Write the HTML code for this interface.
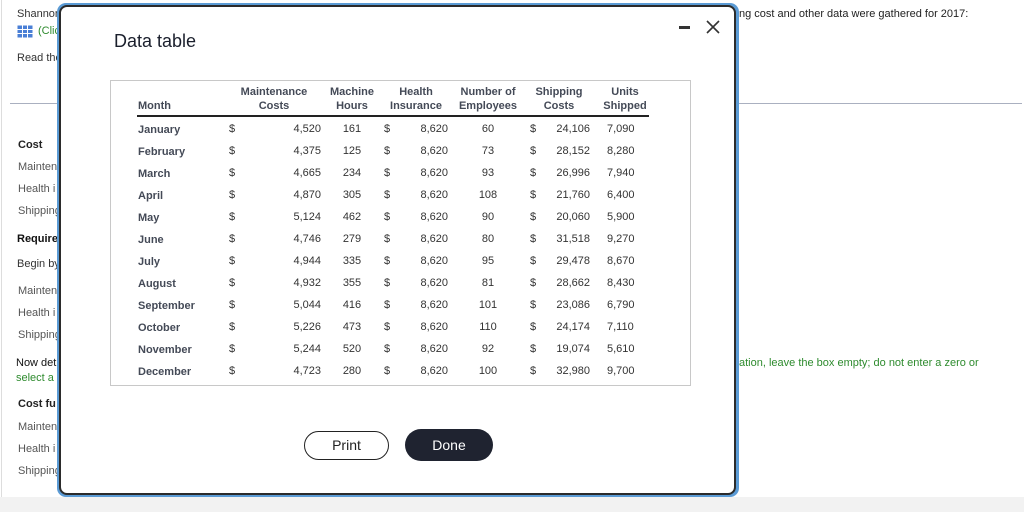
<!DOCTYPE html>
<html><head><meta charset="utf-8"><style>
*{margin:0;padding:0;box-sizing:border-box}
body{width:1024px;height:512px;position:relative;overflow:hidden;background:#fff;font-family:"Liberation Sans",Arial,sans-serif;color:#222}
.a{position:absolute;white-space:nowrap;font-size:11px;line-height:14px}
.bg{color:#333}
.g{color:#2e8b2e}
.b{font-weight:bold}
.m{font-weight:bold;color:#444a57}
.n{color:#333}
.r{text-align:right}
.c{text-align:center}
.h{font-weight:bold;color:#444a57;text-align:center;line-height:14px}
</style></head><body>
<div style="position:absolute;left:0;top:497px;width:1024px;height:15px;background:#f2f2f2"></div>
<div style="position:absolute;left:1px;top:0;width:1px;height:497px;background:#ddd"></div>
<div style="position:absolute;left:10px;top:103px;width:1012px;height:1px;background:#aab0c0"></div>

<div class="a bg" style="left:17px;top:7px">Shannon</div>
<svg style="position:absolute;left:17px;top:25px" width="16" height="13" viewBox="0 0 16 13"><rect x="0.5" y="0.5" width="15" height="12" fill="#4a7fd6"/><g stroke="#fff" stroke-width="1"><line x1="0" y1="4.5" x2="16" y2="4.5"/><line x1="0" y1="8.5" x2="16" y2="8.5"/><line x1="5.5" y1="0" x2="5.5" y2="13"/><line x1="10.5" y1="0" x2="10.5" y2="13"/></g></svg>
<div class="a g" style="left:38px;top:24px">(Click</div>
<div class="a bg" style="left:17px;top:51px">Read the</div>
<div class="a b" style="left:18px;top:138px">Cost</div>
<div class="a bg" style="left:18px;top:160px;color:#555">Maintenance</div>
<div class="a bg" style="left:18px;top:182px;color:#555">Health i</div>
<div class="a bg" style="left:18px;top:204px;color:#555">Shipping</div>
<div class="a b" style="left:17px;top:232px;color:#111">Require</div>
<div class="a bg" style="left:17px;top:257px">Begin by</div>
<div class="a bg" style="left:18px;top:284px;color:#555">Maintenance</div>
<div class="a bg" style="left:18px;top:306px;color:#555">Health i</div>
<div class="a bg" style="left:18px;top:328px;color:#555">Shipping</div>
<div class="a bg" style="left:16px;top:356px;color:#111">Now det</div>
<div class="a g" style="left:16px;top:371px">select a</div>
<div class="a b" style="left:18px;top:397px">Cost fu</div>
<div class="a bg" style="left:18px;top:420px;color:#555">Maintenance</div>
<div class="a bg" style="left:18px;top:442px;color:#555">Health i</div>
<div class="a bg" style="left:18px;top:464px;color:#555">Shipping</div>
<div class="a bg" style="left:739px;top:7px;color:#222">ng cost and other data were gathered for 2017:</div>
<div class="a g" style="left:739px;top:356px">ation, leave the box empty; do not enter a zero or</div>

<div style="position:absolute;left:57px;top:3px;width:682px;height:494px;border-radius:9px;background:#5b9bd5"></div>
<div style="position:absolute;left:59px;top:5px;width:677px;height:490px;border:2px solid #2b2b2b;border-radius:8px;background:#fff"></div>
<div class="a" style="left:114px;top:30px;font-size:18px;line-height:22px;color:#1a1f2c">Data table</div>
<div style="position:absolute;left:679px;top:26px;width:11px;height:3px;background:#333"></div>
<svg style="position:absolute;left:706px;top:20px" width="14" height="14" viewBox="0 0 14 14"><path d="M1 1L13 13M13 1L1 13" stroke="#333" stroke-width="1.6"/></svg>

<div style="position:absolute;left:110px;top:80px;width:581px;height:306px;border:1px solid #c8c8c8"></div>
<div style="position:absolute;left:137px;top:115px;width:512px;height:2px;background:#222"></div>

<div class="a m" style="left:138px;top:99px">Month</div>
<div class="a h" style="left:224px;top:85px;width:100px">Maintenance<br>Costs</div>
<div class="a h" style="left:322px;top:85px;width:60px">Machine<br>Hours</div>
<div class="a h" style="left:381px;top:85px;width:70px">Health<br>Insurance</div>
<div class="a h" style="left:450px;top:85px;width:76px">Number of<br>Employees</div>
<div class="a h" style="left:524px;top:85px;width:70px">Shipping<br>Costs</div>
<div class="a h" style="left:595px;top:85px;width:60px">Units<br>Shipped</div>

<div id="rows"></div>
<div class="a m" style="left:138px;top:123px">January</div><div class="a n" style="left:229px;top:122px">$</div><div class="a n r" style="left:260px;top:122px;width:61px">4,520</div><div class="a n c" style="left:332px;top:122px;width:40px">161</div><div class="a n" style="left:384px;top:122px">$</div><div class="a n r" style="left:400px;top:122px;width:48px">8,620</div><div class="a n c" style="left:468px;top:122px;width:40px">60</div><div class="a n" style="left:530px;top:122px">$</div><div class="a n r" style="left:540px;top:122px;width:50px">24,106</div><div class="a n" style="left:607px;top:122px">7,090</div>
<div class="a m" style="left:138px;top:145px">February</div><div class="a n" style="left:229px;top:144px">$</div><div class="a n r" style="left:260px;top:144px;width:61px">4,375</div><div class="a n c" style="left:332px;top:144px;width:40px">125</div><div class="a n" style="left:384px;top:144px">$</div><div class="a n r" style="left:400px;top:144px;width:48px">8,620</div><div class="a n c" style="left:468px;top:144px;width:40px">73</div><div class="a n" style="left:530px;top:144px">$</div><div class="a n r" style="left:540px;top:144px;width:50px">28,152</div><div class="a n" style="left:607px;top:144px">8,280</div>
<div class="a m" style="left:138px;top:167px">March</div><div class="a n" style="left:229px;top:166px">$</div><div class="a n r" style="left:260px;top:166px;width:61px">4,665</div><div class="a n c" style="left:332px;top:166px;width:40px">234</div><div class="a n" style="left:384px;top:166px">$</div><div class="a n r" style="left:400px;top:166px;width:48px">8,620</div><div class="a n c" style="left:468px;top:166px;width:40px">93</div><div class="a n" style="left:530px;top:166px">$</div><div class="a n r" style="left:540px;top:166px;width:50px">26,996</div><div class="a n" style="left:607px;top:166px">7,940</div>
<div class="a m" style="left:138px;top:189px">April</div><div class="a n" style="left:229px;top:188px">$</div><div class="a n r" style="left:260px;top:188px;width:61px">4,870</div><div class="a n c" style="left:332px;top:188px;width:40px">305</div><div class="a n" style="left:384px;top:188px">$</div><div class="a n r" style="left:400px;top:188px;width:48px">8,620</div><div class="a n c" style="left:468px;top:188px;width:40px">108</div><div class="a n" style="left:530px;top:188px">$</div><div class="a n r" style="left:540px;top:188px;width:50px">21,760</div><div class="a n" style="left:607px;top:188px">6,400</div>
<div class="a m" style="left:138px;top:211px">May</div><div class="a n" style="left:229px;top:210px">$</div><div class="a n r" style="left:260px;top:210px;width:61px">5,124</div><div class="a n c" style="left:332px;top:210px;width:40px">462</div><div class="a n" style="left:384px;top:210px">$</div><div class="a n r" style="left:400px;top:210px;width:48px">8,620</div><div class="a n c" style="left:468px;top:210px;width:40px">90</div><div class="a n" style="left:530px;top:210px">$</div><div class="a n r" style="left:540px;top:210px;width:50px">20,060</div><div class="a n" style="left:607px;top:210px">5,900</div>
<div class="a m" style="left:138px;top:233px">June</div><div class="a n" style="left:229px;top:232px">$</div><div class="a n r" style="left:260px;top:232px;width:61px">4,746</div><div class="a n c" style="left:332px;top:232px;width:40px">279</div><div class="a n" style="left:384px;top:232px">$</div><div class="a n r" style="left:400px;top:232px;width:48px">8,620</div><div class="a n c" style="left:468px;top:232px;width:40px">80</div><div class="a n" style="left:530px;top:232px">$</div><div class="a n r" style="left:540px;top:232px;width:50px">31,518</div><div class="a n" style="left:607px;top:232px">9,270</div>
<div class="a m" style="left:138px;top:255px">July</div><div class="a n" style="left:229px;top:254px">$</div><div class="a n r" style="left:260px;top:254px;width:61px">4,944</div><div class="a n c" style="left:332px;top:254px;width:40px">335</div><div class="a n" style="left:384px;top:254px">$</div><div class="a n r" style="left:400px;top:254px;width:48px">8,620</div><div class="a n c" style="left:468px;top:254px;width:40px">95</div><div class="a n" style="left:530px;top:254px">$</div><div class="a n r" style="left:540px;top:254px;width:50px">29,478</div><div class="a n" style="left:607px;top:254px">8,670</div>
<div class="a m" style="left:138px;top:277px">August</div><div class="a n" style="left:229px;top:276px">$</div><div class="a n r" style="left:260px;top:276px;width:61px">4,932</div><div class="a n c" style="left:332px;top:276px;width:40px">355</div><div class="a n" style="left:384px;top:276px">$</div><div class="a n r" style="left:400px;top:276px;width:48px">8,620</div><div class="a n c" style="left:468px;top:276px;width:40px">81</div><div class="a n" style="left:530px;top:276px">$</div><div class="a n r" style="left:540px;top:276px;width:50px">28,662</div><div class="a n" style="left:607px;top:276px">8,430</div>
<div class="a m" style="left:138px;top:299px">September</div><div class="a n" style="left:229px;top:298px">$</div><div class="a n r" style="left:260px;top:298px;width:61px">5,044</div><div class="a n c" style="left:332px;top:298px;width:40px">416</div><div class="a n" style="left:384px;top:298px">$</div><div class="a n r" style="left:400px;top:298px;width:48px">8,620</div><div class="a n c" style="left:468px;top:298px;width:40px">101</div><div class="a n" style="left:530px;top:298px">$</div><div class="a n r" style="left:540px;top:298px;width:50px">23,086</div><div class="a n" style="left:607px;top:298px">6,790</div>
<div class="a m" style="left:138px;top:321px">October</div><div class="a n" style="left:229px;top:320px">$</div><div class="a n r" style="left:260px;top:320px;width:61px">5,226</div><div class="a n c" style="left:332px;top:320px;width:40px">473</div><div class="a n" style="left:384px;top:320px">$</div><div class="a n r" style="left:400px;top:320px;width:48px">8,620</div><div class="a n c" style="left:468px;top:320px;width:40px">110</div><div class="a n" style="left:530px;top:320px">$</div><div class="a n r" style="left:540px;top:320px;width:50px">24,174</div><div class="a n" style="left:607px;top:320px">7,110</div>
<div class="a m" style="left:138px;top:343px">November</div><div class="a n" style="left:229px;top:342px">$</div><div class="a n r" style="left:260px;top:342px;width:61px">5,244</div><div class="a n c" style="left:332px;top:342px;width:40px">520</div><div class="a n" style="left:384px;top:342px">$</div><div class="a n r" style="left:400px;top:342px;width:48px">8,620</div><div class="a n c" style="left:468px;top:342px;width:40px">92</div><div class="a n" style="left:530px;top:342px">$</div><div class="a n r" style="left:540px;top:342px;width:50px">19,074</div><div class="a n" style="left:607px;top:342px">5,610</div>
<div class="a m" style="left:138px;top:365px">December</div><div class="a n" style="left:229px;top:364px">$</div><div class="a n r" style="left:260px;top:364px;width:61px">4,723</div><div class="a n c" style="left:332px;top:364px;width:40px">280</div><div class="a n" style="left:384px;top:364px">$</div><div class="a n r" style="left:400px;top:364px;width:48px">8,620</div><div class="a n c" style="left:468px;top:364px;width:40px">100</div><div class="a n" style="left:530px;top:364px">$</div><div class="a n r" style="left:540px;top:364px;width:50px">32,980</div><div class="a n" style="left:607px;top:364px">9,700</div>

<div style="position:absolute;left:304px;top:431px;width:85px;height:29px;border:1.5px solid #222;border-radius:15px;font-size:14px;line-height:26px;text-align:center;color:#222">Print</div>
<div style="position:absolute;left:405px;top:429px;width:88px;height:32px;background:#1f2330;border-radius:16px;font-size:14px;line-height:32px;text-align:center;color:#fff">Done</div>
</body></html>
